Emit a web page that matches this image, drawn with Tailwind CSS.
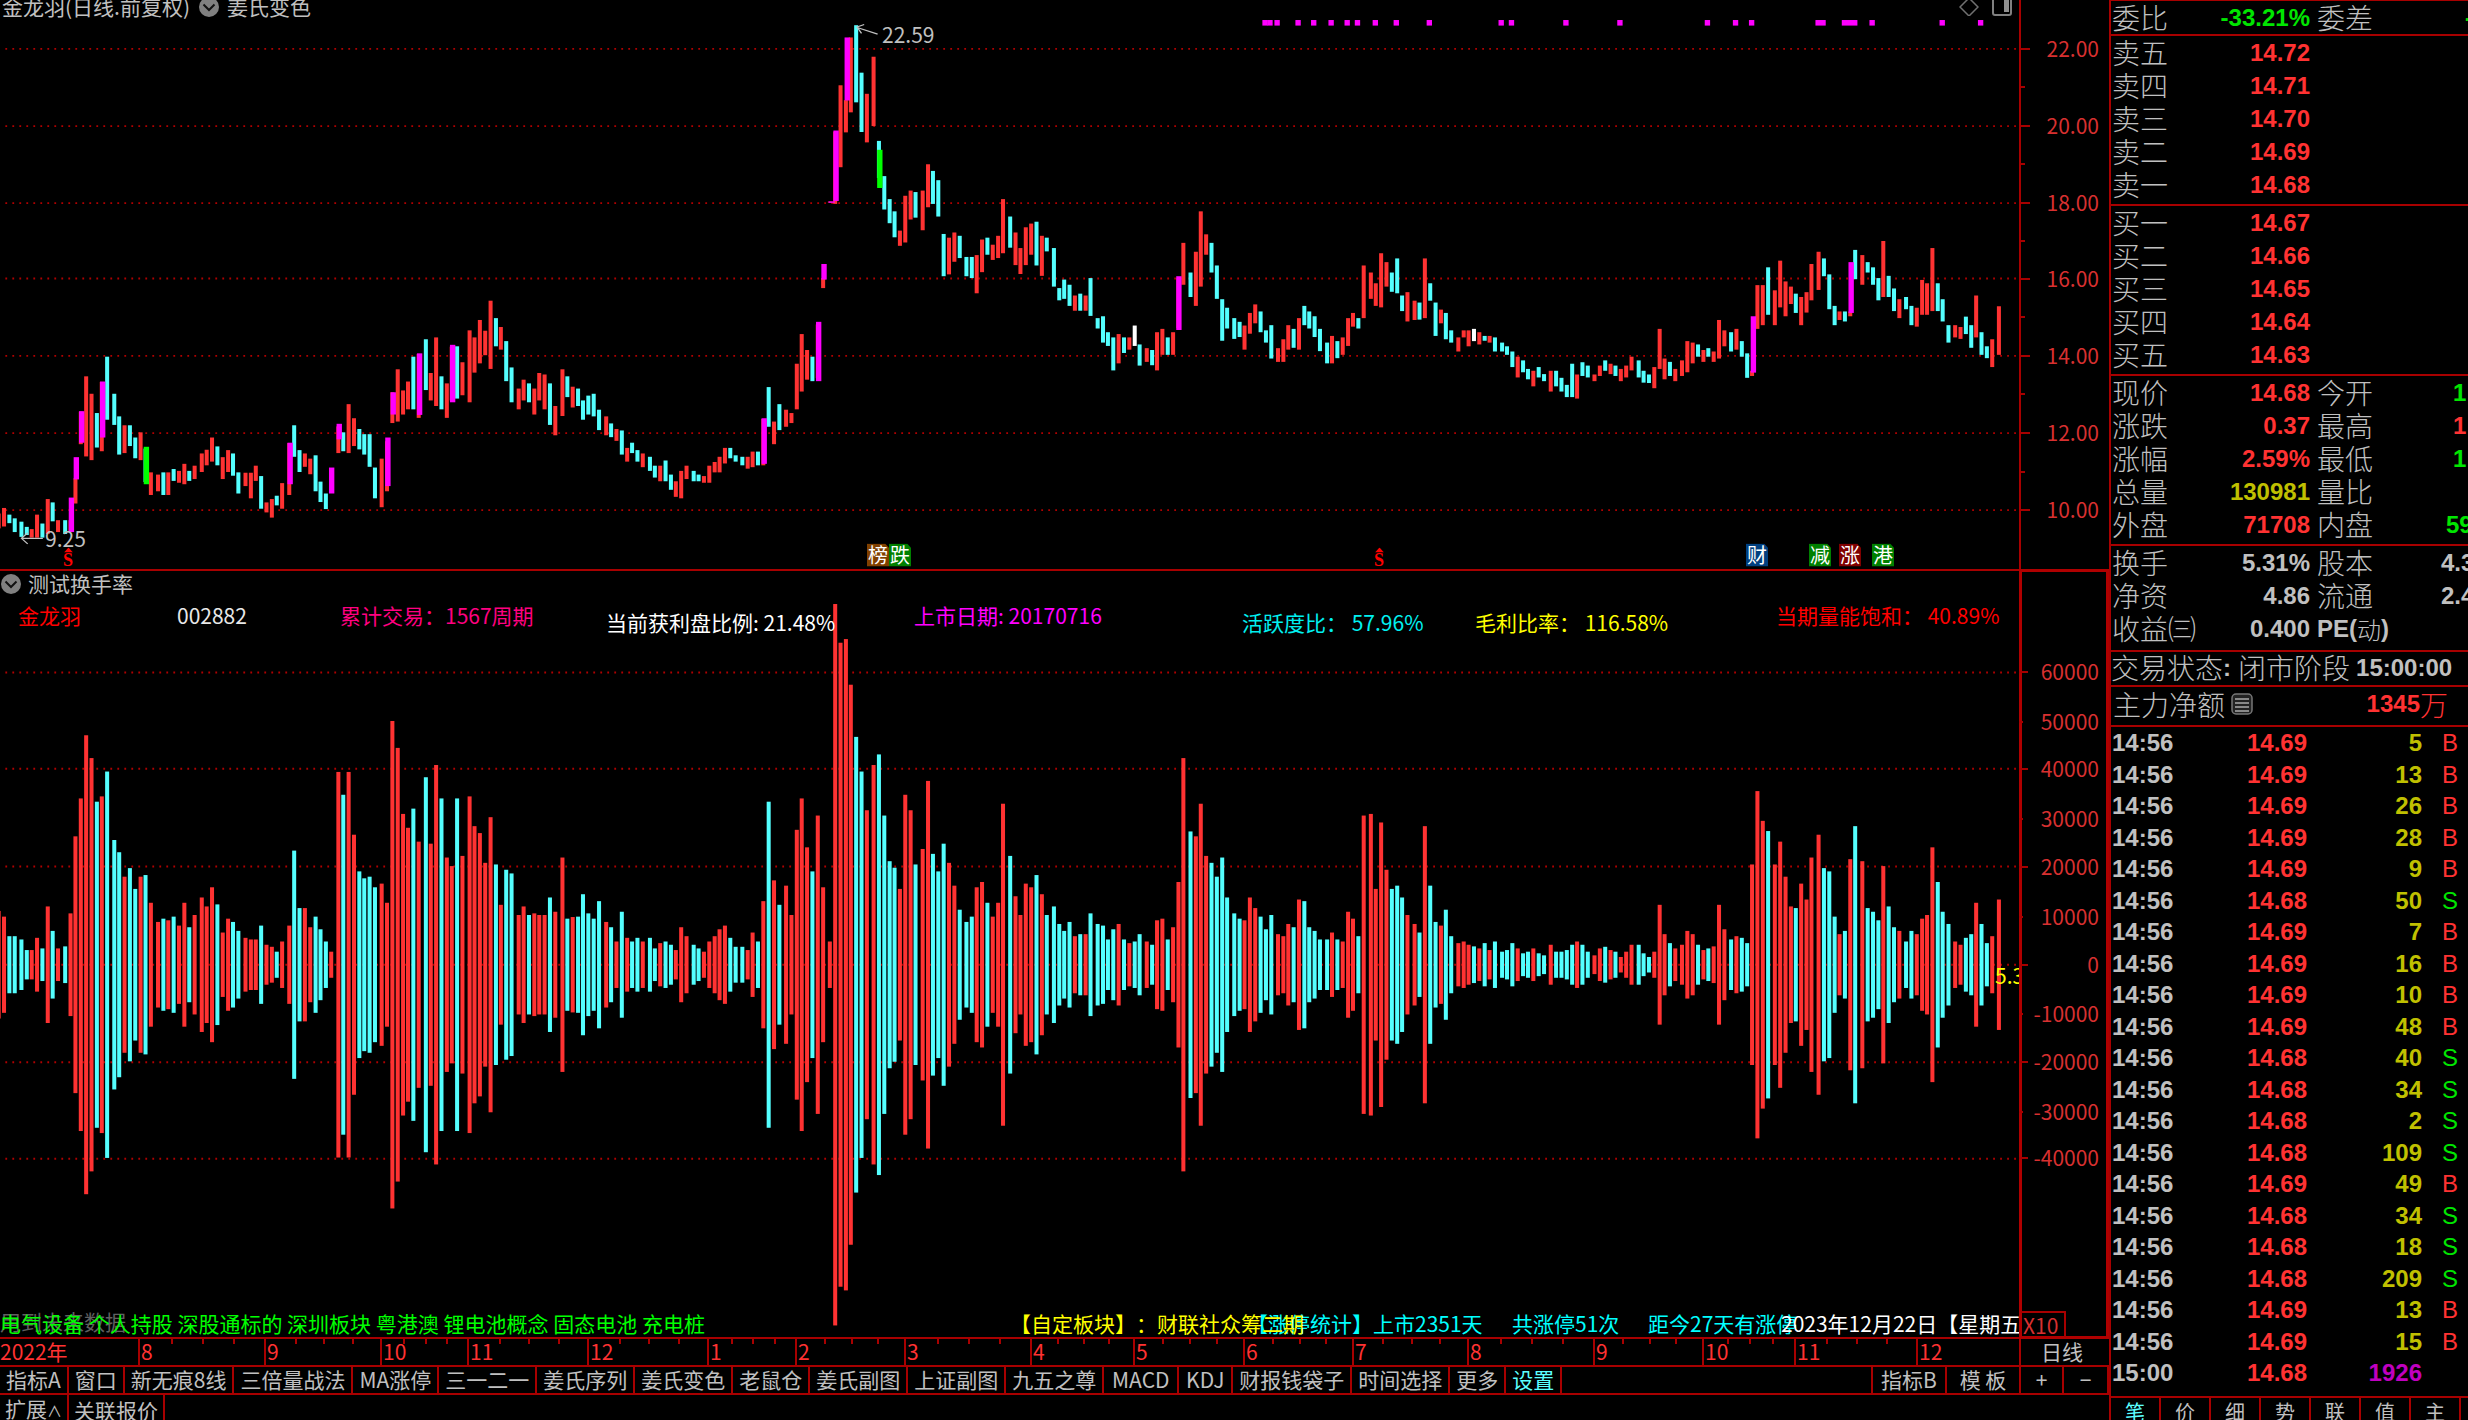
<!DOCTYPE html>
<html lang="zh-CN">
<head>
<meta charset="utf-8">
<meta name="viewport" content="width=device-width, initial-scale=1">
<title>金龙羽 002882</title>
<script src="https://cdn.jsdelivr.net/npm/@tailwindcss/browser@4"></script>
</head>
<body class="bg-black">
<div class="flex h-screen overflow-hidden bg-black font-['Noto_Sans_CJK_SC',sans-serif] text-[21px] leading-6 text-[#c0c0c0] [text-spacing-trim:space-all]">

  <main class="flex min-w-0 flex-1 flex-col">

    <!-- price pane -->
    <section class="flex min-h-0 flex-[570_1_0%] border-b-2 border-[#a80000]">
      <div class="relative min-w-0 flex-1 overflow-hidden">
        <svg id="price" class="absolute inset-0 size-full" viewBox="0 0 4523 1535" preserveAspectRatio="none"></svg>
        <div id="priceMarks" class="absolute inset-0"></div>
        <header class="relative flex h-[12px] items-center pl-[2px] whitespace-nowrap">
          <h1>金龙羽(日线.前复权)</h1>
          <button class="mr-[7px] ml-[8px]" aria-label="指标菜单">
            <svg class="block size-[22px]" viewBox="0 0 22 22"><circle cx="11" cy="12" r="10" fill="#808080"/><path d="M5.500 9.500L11 15l5.500-5.500" fill="none" stroke="#111" stroke-width="2"/></svg>
          </button>
          <span>姜氏变色</span>
          <span class="ml-auto flex items-center gap-[13px] pr-[7px]">
            <svg class="h-[20px] w-[20px]" viewBox="0 0 20 20"><path d="M10 2l9 9-9 9-9-9z" fill="none" stroke="#707070" stroke-width="1.500"/></svg>
            <svg class="h-[20px] w-[20px]" viewBox="0 0 20 20"><rect x="1" y="1" width="18" height="18" rx="2" fill="none" stroke="#808080" stroke-width="2"/><rect x="12" y="4" width="5" height="12" fill="#909090"/></svg>
          </span>
        </header>
      </div>
      <div id="priceAxis" class="relative w-[90px] border-l-2 border-[#a80000] text-[#d83030]"></div>
    </section>

    <!-- indicator pane -->
    <section class="flex min-h-0 flex-[767_1_0%]">
      <div class="relative min-w-0 flex-1 overflow-hidden">
        <svg id="volume" class="absolute inset-0 size-full" viewBox="0 24 4523 1879" preserveAspectRatio="none"></svg>
        <div id="volumeMarks" class="absolute inset-0"></div>
        <header class="relative flex h-[24px] items-center gap-[6px] whitespace-nowrap">
          <button aria-label="副图菜单">
            <svg class="block size-[22px]" viewBox="0 0 22 22"><circle cx="11" cy="12" r="10" fill="#808080"/><path d="M5.500 9.500L11 15l5.500-5.500" fill="none" stroke="#111" stroke-width="2"/></svg>
          </button>
          <h2>测试换手率</h2>
        </header>
      </div>
      <div id="volumeAxis" class="relative w-[90px] text-[#d83030]">
        <div class="absolute -top-[2px] -bottom-[2px] left-0 right-0 border-[3px] border-[#b00000]"></div>
        <div class="absolute bottom-0 left-[2px] border-2 border-b-0 border-l-0 border-[#a80000] pr-[6px] pl-[2px]">X10</div>
      </div>
    </section>

    <!-- month ruler -->
    <div class="flex h-[28px] shrink-0 border-t-2 border-[#a80000] whitespace-nowrap text-[#ff3232]">
      <div id="months" class="flex min-w-0 flex-1"></div>
      <button class="w-[90px] border-l-2 border-[#a80000] pr-[6px] pb-[2px] text-[#c0c0c0]">日线</button>
    </div>

    <!-- indicator templates -->
    <nav class="flex h-[30px] shrink-0 border-y-2 border-[#a80000] whitespace-nowrap *:border-r-2 *:border-[#a80000] *:px-[6px] *:pb-[2px]">
      <button>指标A</button><button>窗口</button><button>新无痕8线</button><button>三倍量战法</button><button>MA涨停</button><button>三一二一</button><button>姜氏序列</button><button>姜氏变色</button><button>老鼠仓</button><button>姜氏副图</button><button>上证副图</button><button>九五之尊</button><button class="w-[75px]">MACD</button><button class="w-[54px]">KDJ</button><button>财报钱袋子</button><button>时间选择</button><button>更多</button><button class="text-[#5cffff]">设置</button>
      <div class="flex-1"></div>
      <button class="w-[74px]">指标B</button><button class="w-[74px]">模 板</button><button class="w-[43px]">+</button><button class="w-[45px] border-r-0">−</button>
    </nav>

    <!-- extension bar -->
    <nav class="flex h-[25px] shrink-0 items-start overflow-hidden whitespace-nowrap *:h-[29px] *:border-r-2 *:border-[#a80000] *:px-[5px]">
      <button class="w-[69px]">扩展<span class="text-[15px]">∧</span></button><button>关联报价</button>
    </nav>
  </main>

  <!-- quote panel -->
  <aside class="flex w-[359px] shrink-0 flex-col overflow-hidden border-t border-l-2 border-[#a80000] text-[28px] leading-[33px] font-light whitespace-nowrap">
    <div id="quote"></div>
    <div class="flex h-[35px] items-center border-t-2 border-[#a80000] pb-[2px]">交易状态<b class="font-['Liberation_Sans',sans-serif] text-2xl font-bold">:</b><span class="ml-[7px]">闭市阶段</span><b class="ml-[6px] font-['Liberation_Sans',sans-serif] text-2xl font-bold">15:00:00</b></div>
    <div class="flex h-[40px] items-center border-t-2 border-[#a80000] pb-[4px] pl-[2px]">主力净额
      <svg class="ml-[6px] h-[22px] w-[22px]" viewBox="0 0 22 22"><rect x="1" y="1" width="20" height="20" rx="4" fill="#222" stroke="#777" stroke-width="1.500"/><path d="M4 6h14M4 10h14M4 14h14M4 18h14" stroke="#aaa" stroke-width="1.500"/></svg>
      <span class="ml-auto flex items-center pr-[20px] text-[#ff3232]"><b class="font-['Liberation_Sans',sans-serif] text-2xl font-bold">1345</b>万</span>
    </div>
    <div class="flex-1 border-t-2 border-[#a80000]">
      <table class="w-full table-fixed border-collapse font-['Liberation_Sans',sans-serif] text-2xl leading-[31px] font-bold">
        <colgroup><col class="w-[80px]"><col class="w-[116px]"><col class="w-[115px]"><col></colgroup>
        <tbody id="ticks"></tbody>
      </table>
    </div>
    <nav class="flex h-[24px] shrink-0 overflow-hidden border-t-2 border-[#a80000] text-[20px] leading-6 font-normal *:h-[28px] *:w-[50px] *:shrink-0 *:border-r-2 *:border-[#a80000]">
      <button class="text-[#5cffff]">笔</button><button>价</button><button>细</button><button>势</button><button>联</button><button>值</button><button>主</button>
    </nav>
  </aside>
</div>

<script>
// One entry per trading day: colour, x, high, low, top of the turnover bar.
const blocks = [[0, `r-3 1385 1425 858,r9 1370 1420 872,c21 1388 1411 920,c33 1398 1435 920,c48 1407 1448 928,c60 1421 1443 954,r71 1427 1450 954,r83 1388 1450 924,c95 1412 1450 950,r107 1346 1440 847,c118 1355 1406 907,r130 1403 1435 950,c146 1403 1440 945,r158 1403 1435 864,r169 1290 1358 675,r181 1110 1198 582,r193 1015 1231 427,r205 1062 1241 483,c217 1114 1207 590,r228 1030 1217 577,c240 962 1132 516,c256 1062 1146 684,c267 1123 1226 714,r279 1147 1222 774,c291 1147 1203 753,c303 1180 1236 804,r315 1166 1241 774,c326 1210 1300 770,r338 1274 1335 838,r354 1280 1325 885,c366 1274 1335 877,r377 1274 1335 881,c389 1265 1297 872,r401 1270 1302 894,r413 1251 1306 838,c424 1270 1297 898,r436 1256 1292 868,r452 1223 1273 825,r463 1213 1255 847,r475 1180 1245 800,c487 1204 1255 842,r499 1233 1292 911,r511 1214 1273 877,c522 1223 1283 885,c534 1274 1331 907,r550 1275 1311 924,r562 1275 1344 928,r573 1256 1297 928,c585 1284 1372 894,r597 1355 1382 941,r609 1346 1396 946,c620 1337 1363 958,r632 1303 1372 933,r648 1195 1335 894,c659 1147 1232 710,c671 1214 1273 851,r683 1223 1259 851,r695 1237 1279 898,c707 1228 1325 872,c718 1299 1354 903,c730 1331 1373 933,r742 1270 1325 958,r758 1150 1222 517,c769 1166 1217 573,r781 1090 1222 517,r793 1128 1203 671,c805 1157 1212 761,c816 1171 1226 778,c828 1171 1259 774,c840 1261 1344 800,r855 1237 1368 791,r867 1190 1325 838,r879 1058 1141 392,r891 996 1137 458,r903 1053 1118 620,r914 1029 1104 654,c926 962 1104 607,r938 955 1127 688,c954 915 1052 530,r965 1006 1080 693,r977 910 1095 500,c989 1015 1104 582,r1001 1034 1127 727,r1012 935 1080 748,c1024 934 1075 582,r1036 977 1066 723,r1052 891 1085 577,r1063 910 1005 650,r1075 863 980 667,r1087 892 958 740,r1099 811 995 628,c1111 858 934 744,r1122 882 943 843,c1134 920 1028 757,c1146 991 1085 766,r1162 1048 1104 868,r1173 1024 1080 847,c1185 1034 1085 868,r1197 1048 1118 864,r1208 1006 1080 868,r1220 1010 1104 868,c1232 1034 1146 825,r1244 1095 1174 860,r1260 996 1122 727,c1271 1015 1071 877,r1283 1043 1099 873,c1295 1048 1095 872,c1306 1080 1132 817,c1318 1067 1118 864,c1330 1062 1123 877,c1342 1105 1160 834,r1358 1123 1174 885,c1369 1142 1179 898,r1381 1157 1189 933,c1393 1161 1226 860,r1405 1208 1245 924,c1416 1194 1222 933,c1428 1214 1245 924,r1440 1223 1260 933,c1456 1232 1270 924,c1467 1256 1288 950,r1479 1256 1298 937,c1491 1242 1298 933,c1503 1280 1321 941,r1514 1298 1340 954,r1526 1270 1344 898,r1538 1256 1292 920,c1554 1270 1298 941,c1565 1280 1298 950`],
[1568, `r9 1284 1302 958,r21 1256 1302 933,r33 1246 1274 920,r44 1232 1274 903,r56 1208 1250 894,c68 1208 1236 924,c80 1228 1245 946,c95 1232 1255 946,r107 1232 1264 954,r118 1218 1260 911,c130 1218 1255 933,r142 1130 1255 834,c154 1044 1151 590,r166 1137 1198 783,c178 1090 1160 843,r193 1105 1151 796,r205 1114 1141 868,r217 981 1104 659,r228 901 1056 582,r240 944 1024 702,c252 962 1028 761,r264 875 1020 624,r276 750 777 800,r291 544 546 933,r303 355 550 105,r315 230 451 200,r327 270 357 191,r338 101 303 303,c350 68 276 431,c362 196 356 516,r374 253 384 611,r389 153 340 500,c401 380 480 474,c413 475 565 624,c425 537 602 736,c436 570 640 752,r448 622 663 804,r460 528 654 573,r472 514 592 611,c483 518 587 744,r499 514 621 706,r511 443 559 539,c522 461 550 718,c534 486 584 761,c546 631 745 693,r558 641 740 740,r570 627 706 796,c582 636 696 855,c597 693 745 885,c609 693 750 872,r620 688 791 800,r632 646 734 787,c644 641 687 838,r656 660 701 872,r668 636 696 838,r679 537 683 595,c695 584 668 723,r707 627 715 822,r718 669 739 868,r730 613 715 791,r742 603 687 800,c754 598 716 770,r766 636 744 817,c777 641 678 868,c793 669 773 847,c805 777 810 890,c816 754 806 907,c828 768 825 885,r840 797 838 920,c852 792 838 915,r864 797 838 915,c875 750 852 864,c891 858 886 890,c903 853 924 894,c914 896 933 928,c926 910 999 903,r938 901 980 890,c950 910 952 928,r962 910 943 937,w974 878 933 933,c985 929 986 915,r1001 939 976 933,c1013 944 985 941,r1024 896 999 881,r1036 887 957 877,c1048 910 957 928,r1060 896 957 898,r1072 750 885 787,r1083 655 768 483,c1099 735 801 663,r1111 679 825 675,r1122 570 773 595,r1134 632 687 723,c1146 655 735 740,c1158 716 806 774,c1170 807 919 727,c1181 830 886 825,c1197 858 914 864,c1209 868 909 877,r1220 878 943 881,r1232 844 900 825,r1244 821 872 851,c1256 840 896 872,c1268 891 924 903,c1280 877 967 868,r1295 939 976 915,r1307 915 976 920,r1318 877 943 890,c1330 887 938 898,r1342 858 943 830,c1354 825 877 834,c1365 840 886 898,c1377 853 909 907,c1389 887 947 928,c1405 924 980 928,r1416 906 980 911,c1428 920 966 928,r1440 910 957 933,r1452 858 933 860,r1463 844 881 877,c1475 858 886 920,r1487 716 858 624,r1503 735 806 620,r1514 764 825 804,r1526 683 829 641,r1538 707 773 757,c1550 735 787 804,c1562 697 791 796`],
[3136, `c5 797 839 825,r17 788 867 868,r33 811 863 890,c44 816 862 911,r56 697 858 650,c68 764 811 796,c80 816 906 885,r92 835 872 894,c103 844 915 855,c115 891 924 920,r131 910 948 937,r143 891 910 933,r154 891 934 941,w166 887 920 945,r178 896 929 950,c190 906 919 937,r201 906 924 954,c213 910 948 933,c229 924 948 958,c240 934 957 954,c252 948 990 937,r264 962 1018 950,c276 972 1004 962,c287 995 1023 958,r299 1000 1042 950,c311 990 1018 962,c323 1009 1028 967,r338 1000 1056 941,c350 1000 1042 958,c362 1019 1056 958,c374 1038 1071 954,c386 981 1071 941,r397 1010 1075 933,c409 977 1014 941,c421 986 1018 958,r436 1010 1028 967,r448 986 1014 950,c460 972 1000 946,r472 981 1009 954,c483 986 1014 958,r495 995 1028 971,r507 986 1018 958,r519 962 999 941,c535 972 1018 941,c546 1000 1032 962,c558 1010 1033 971,r570 990 1047 958,r582 887 995 843,r593 967 1023 915,c605 976 1014 937,r617 995 1028 950,r632 972 1014 941,r644 920 1004 907,r656 924 980 915,c668 929 962 941,r680 944 976 954,c691 939 962 950,r703 948 976 945,r715 863 967 843,r727 891 934 903,c742 896 948 928,r754 887 943 920,c766 920 962 924,c778 953 1019 937,r789 1000 1014 744,r801 769 887 564,r813 769 877 637,c825 721 849 662,r840 783 877 744,r852 703 829 688,r864 759 853 774,r876 773 820 847,c887 792 844 851,r899 801 877 791,r911 788 843 830,r922 712 810 727,r938 679 782 671,c950 697 745 753,c962 740 834 761,c974 825 877 872,r985 840 863 915,c997 840 867 907,r1009 840 853 731,c1020 674 753 650,r1036 688 768 736,c1048 707 735 851,c1060 721 768 860,c1072 750 810 881,r1083 650 801 748,c1095 744 801 847,c1107 778 839 898,r1119 807 858 907,c1134 801 834 933,c1146 825 877 907,r1158 830 881 915,r1170 755 849 877,r1181 764 849 868,r1193 669 839 702,c1205 764 839 787,c1216 807 867 860,c1229 877 924 890,r1244 877 910 933,r1256 882 914 941,c1268 854 901 924,c1280 877 938 915,r1291 797 910 838,c1303 896 957 890,c1315 934 966 937,r1327 915 990 920,r1342 826 957 830`]];

const colours = { r: '#ff3232', c: '#54ffff', w: '#ffffff', m: '#ff00ff', g: '#00ff00' };
const rect = (x, y, w, h, f) => `<rect x="${x}" y="${y}" width="${w}" height="${h}" fill="${f}"/>`;
const grid = y => `<path d="M12 ${y}H4520" stroke="#b00000" stroke-width="5" stroke-dasharray="4 11.68"/>`;

// Limit-up (m) and limit-down (g) bodies drawn over the daily bars.
const bodies = `m160 1342 1435,m171 1233 1293,m183 1109 1194,m230 1029 1180,g328 1205 1306,m650 1194 1306,m743 1261 1331,m760 1143 1185,m869 1180 1311,m881 1058 1118,m940 953 1119,m1014 930 1085,m1712 1128 1251,m1834 868 1028,m1846 712 754,m1873 352 542,m1898 101 271,g1971 404 507,m2641 745 890,m3928 853 1005,m4147 707 844`;
const signals = [[2834,12],[2845,12],[2861,12],[2908,12],[2943,12],[2982,12],[3018,12],[3041,12],[3081,12],[3128,12],[3202,12],[3363,12],[3386,12],[3508,12],[3629,12],[3825,12],[3888,12],[3924,12],[4073,23],[4132,35],[4194,12],[4351,12],[4437,12]];

let price = [132,340,548,751,960,1168,1376].map(grid).join('');
let volume = [273,509,749,990,1229,1466].map(grid).join('');
for (const [offset, rows] of blocks) for (const row of rows.split(',')) {
  const [x, hi, lo, top] = row.slice(1).split(' ').map(Number);
  const left = offset + x - 4.5;
  price += rect(left, hi, 9, lo - hi, colours[row[0]]);
  volume += rect(left, top, 9, (990 - top) * 2, colours[row[0] === 'w' ? 'c' : row[0]]);
}
for (const b of bodies.split(',')) {
  const [x, hi, lo] = b.slice(1).split(' ').map(Number);
  price += rect(x - 6, hi, 12, lo - hi, colours[b[0]]);
}
price += rect(1856, 543, 14, 4, colours.m);
for (const [x, w] of signals) price += rect(x - 6, 54, w, 15, colours.m);
price += '<g fill="none" stroke="#c0c0c0" stroke-width="3"><path d="M48 1452H96M62 1437L48 1452L62 1467"/><path d="M1966 92L1922 75M1936 66L1920 73L1930 90"/></g>';
document.getElementById('price').innerHTML = price;
document.getElementById('volume').innerHTML = volume;

// Labels are placed by their left edge and vertical centre, as a share of the plot.
const label = (w, h, x, y, cls, text) => `<span class="absolute -translate-y-1/2 whitespace-pre ${cls}" style="left:${x / w * 100}%;top:${y / h * 100}%">${text}</span>`;
const badge = 'h-[23px] w-[22px] text-center text-[20px] leading-[22px] text-white [clip-path:polygon(0_0,82%_0,100%_18%,100%_100%,0_100%)] ';
const sell = '<svg class="mx-auto block h-[5px] w-[9px]" viewBox="0 0 9 5"><path d="M4.500 0L9 5H0z" fill="#f00"/></svg><span class="block leading-[14px]">S</span>';
document.getElementById('priceMarks').innerHTML = [
  [45, 537, '', '9.25'], [882, 34, '', '22.59'],
  [63, 556, "font-['Liberation_Serif',serif] text-[18px] font-bold text-[#f00]", sell],
  [1374, 556, "font-['Liberation_Serif',serif] text-[18px] font-bold text-[#f00]", sell],
  [867, 554, badge + 'bg-[#804000]', '榜'], [889, 554, badge + 'bg-[#008000]', '跌'],
  [1746, 554, badge + 'bg-[#004080]', '财'], [1809, 554, badge + 'bg-[#008000]', '减'],
  [1839, 554, badge + 'bg-[#800000]', '涨'], [1872, 554, badge + 'bg-[#008000]', '港'],
].map(a => label(2019, 568, ...a)).join('');
document.getElementById('volumeMarks').innerHTML = [
  [18, 44, 'text-[#f00]', '金龙羽'], [177, 44, 'text-[#e8e8e8]', '002882'],
  [340, 44, 'text-[#ff0080]', '累计交易：1567周期'], [606, 51, 'text-white', '当前获利盘比例: 21.48%'],
  [914, 44, 'text-[#f0f]', '上市日期: 20170716'], [1242, 51, 'text-[#00f0f0]', '活跃度比： 57.96%'],
  [1475, 51, 'text-[#ff0]', '毛利比率： 116.58%'], [1776, 44, 'text-[#f00]', '当期量能饱和： 40.89%'],
  [1995, 404, 'text-[#ff0]', '5.3'],
  [0, 751, 'text-[#606060]', '用到未来数据'],
  [0, 753, 'text-[#0f0]', '电气设备 个人持股 深股通标的 深圳板块 粤港澳 锂电池概念 固态电池 充电桩'],
  [1247, 753, 'text-[#0ff]', '【涨停统计】上市2351天'], [1512, 753, 'text-[#0ff]', '共涨停51次'], [1648, 753, 'text-[#0ff]', '距今27天有涨停'],
  [1010, 753, 'text-[#ff0]', '【自定板块】：财联社众筹二期'],
  [1781, 753, 'text-white', '2023年12月22日【星期五'],
].map(a => label(2019, 767, ...a)).join('');

// Axis ticks; entries flagged 1 are minor ones.
const axis = (id, h, ticks) => document.getElementById(id).insertAdjacentHTML('beforeend', ticks.map(([y, t, minor]) =>
  `<i class="absolute left-0 h-[2px] -translate-y-1/2 bg-[#a80000] ${minor ? 'w-[4px]' : 'w-[9px]'}" style="top:${y / h * 100}%"></i>` +
  (t ? `<span class="absolute right-[10px] -translate-y-1/2" style="top:${(y - 1) / h * 100}%">${t}</span>` : '')).join(''));
axis('priceAxis', 568, [[49,'22.00'],[87,'',1],[126,'20.00'],[164,'',1],[203,'18.00'],[241,'',1],[278,'16.00'],[316,'',1],[355,'14.00'],[393,'',1],[432,'12.00'],[471,'',1],[509,'10.00']]);
axis('volumeAxis', 767, [[101,'60000'],[151,'50000',1],[198,'40000'],[248,'30000',1],[296,'20000'],[346,'10000',1],[394,'0'],[444,'-10000',1],[492,'-20000'],[542,'-30000',1],[588,'-40000']]);

const starts = [0,138,264,380,467,587,707,795,904,1030,1133,1243,1352,1467,1593,1702,1794,1916,2019];
const names = ['2022年','8','9','10','11','12','1','2','3','4','5','6','7','8','9','10','11','12'];
document.getElementById('months').innerHTML = names.map((n, i) => {
  const marks = i && i < names.length - 1 ? [25, 50, 75].map(p => `<i class="absolute top-0 h-[5px] w-[2px] bg-[#a80000]" style="left:${p}%"></i>`).join('') : '';
  return `<span class="relative ${i ? 'border-l-2 pl-px' : ''} border-[#a80000]" style="width:${(starts[i + 1] - starts[i]) / 20.19}%">${n}${marks}</span>`;
}).join('');

const R = 'text-[#ff3232]', G = 'text-[#00e600]', Y = 'text-[#c0c000]', W = '';
const bold = "font-['Liberation_Sans',sans-serif] text-2xl leading-[33px] font-bold";
const sections = [
  [['委比', '-33.21%', G, '委差', '-', G, 'pl-[48px]']],
  [['卖五','14.72',R],['卖四','14.71',R],['卖三','14.70',R],['卖二','14.69',R],['卖一','14.68',R]],
  [['买一','14.67',R],['买二','14.66',R],['买三','14.65',R],['买四','14.64',R],['买五','14.63',R]],
  [['现价','14.68',R,'今开','1',G,'pl-[36px]'],['涨跌','0.37',R,'最高','1',R,'pl-[36px]'],['涨幅','2.59%',R,'最低','1',G,'pl-[36px]'],['总量','130981',Y,'量比'],['外盘','71708',R,'内盘','59',G,'pl-[29px]']],
  [['换手','5.31%',W,'股本','4.3',W,'pl-[24px]'],['净资','4.86',W,'流通','2.4',W,'pl-[24px]'],['收益㈢','0.400',W,`<span class="flex ${bold}">PE(<span class="font-['Noto_Sans_CJK_SC',sans-serif] font-light">动</span>)</span>`]],
];
document.getElementById('quote').innerHTML = sections.map((rows, i) =>
  `<dl class="border-[#a80000] pl-px ${i ? 'border-t-2 pb-[3px]' : ''} ${i === 4 ? 'pb-[5px]' : ''}">` + rows.map(([a, b, c, d = '', e = '', f = '', g = '']) =>
  `<div class="flex h-[33px]"><dt class="w-[88px] shrink-0">${a}</dt><dd class="w-[110px] shrink-0 text-right ${bold} ${c}">${b}</dd><dt class="ml-[7px] w-[100px] shrink-0">${d}</dt><dd class="${bold} ${f} ${g}">${e}</dd></div>`).join('') + '</dl>').join('');

const ticks = '14.69 5 B,14.69 13 B,14.69 26 B,14.69 28 B,14.69 9 B,14.68 50 S,14.69 7 B,14.69 16 B,14.69 10 B,14.69 48 B,14.68 40 S,14.68 34 S,14.68 2 S,14.68 109 S,14.69 49 B,14.68 34 S,14.68 18 S,14.68 209 S,14.69 13 B,14.69 15 B,14.68 1926';
document.getElementById('ticks').innerHTML = ticks.split(',').map(t => {
  const [p, v, s = ''] = t.split(' ');
  return `<tr class="h-[31px] even:h-[32px]"><td class="p-0 pl-px">${s ? '14:56' : '15:00'}</td><td class="p-0 text-right text-[#ff3232]">${p}</td><td class="p-0 text-right ${s ? 'text-[#c0c000]' : 'text-[#c000c0]'}">${v}</td><td class="p-0 pl-[20px] font-normal ${s === 'B' ? 'text-[#ff3232]' : 'text-[#00e600]'}">${s}</td></tr>`;
}).join('');
</script>
</body>
</html>
